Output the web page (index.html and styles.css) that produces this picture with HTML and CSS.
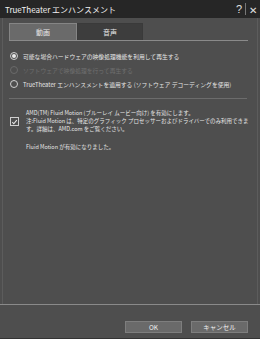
FILE: index.html
```html
<!DOCTYPE html>
<html>
<head>
    <title>TrueTheater エンハンスメント</title>
    <link rel="stylesheet" href="styles.css">
</head>
<body>
    <div class="window">
        <div class="titlebar">
            <span class="title">TrueTheater エンハンスメント</span>
            <span class="controls">
                <span class="help">?</span>
                <span class="divider"></span>
                <span class="close">✕</span>
            </span>
        </div>
        <div class="panel">
            <div class="tabs">
                <div class="tab active">動画</div>
                <div class="tab">音声</div>
            </div>
            <div class="options">
                <div class="option">
                    <span class="radio checked"></span>
                    <span>可能な場合ハードウェアの映像処理機能を利用して再生する</span>
                </div>
                <div class="option disabled">
                    <span class="radio"></span>
                    <span>ソフトウェアで映像処理を行って再生する</span>
                </div>
                <div class="option">
                    <span class="radio"></span>
                    <span>TrueTheater エンハンスメントを適用する (ソフトウェア デコーディングを使用)</span>
                </div>
            </div>
            <div class="fluid">
                <span class="checkbox">
                    <svg width="8" height="8" viewBox="0 0 8 8"><path d="M1.5 4.2 L3.2 6 L6.6 1.8" fill="none" stroke="#e8e8e8" stroke-width="1.2"/></svg>
                </span>
                <div class="fluid-text">
                    <p>AMD(TM) Fluid Motion (ブルーレイ ムービー向け) を有効にします。<br>注:Fluid Motion は、特定のグラフィック プロセッサーおよびドライバーでのみ利用できま<br>す。詳細は、AMD.com をご覧ください。</p>
                    <p class="status">Fluid Motion が有効になりました。</p>
                </div>
            </div>
        </div>
        <div class="footer">
            <button class="button">OK</button>
            <button class="button">キャンセル</button>
        </div>
    </div>
</body>
</html>
```

FILE: styles.css
```css
body {
    margin: 0;
    background: #1e1e1e;
    font-family: "Noto Sans CJK JP", "Liberation Sans", sans-serif;
    color: #e6e6e6;
}
.window {
    width: 260px;
    height: 339px;
    background: #4e4e4e;
    display: flex;
    flex-direction: column;
    box-sizing: border-box;
    border-bottom: 1px solid #333;
}
.titlebar {
    height: 18px;
    background: #262626;
    display: flex;
    align-items: center;
    justify-content: space-between;
    padding: 0 3px 0 5px;
    flex-shrink: 0;
}
.title {
    font-size: 8px;
    color: #f2f2f2;
}
.controls {
    display: flex;
    align-items: center;
    gap: 3px;
    color: #e0e0e0;
}
.help {
    font-family: "Liberation Sans", sans-serif;
    font-size: 11px;
}
.divider {
    width: 1px;
    height: 12px;
    background: #777;
}
.close {
    font-size: 10px;
}
.panel {
    flex: 1;
    margin: 0 2px;
    border-left: 1px solid #5c5c5c;
    border-right: 1px solid #5c5c5c;
    padding: 5px 10px 0 6px;
}
.tabs {
    display: flex;
    border-bottom: 1px solid #8a8a8a;
    margin-right: -1px;
}
.tab {
    width: 66px;
    height: 17px;
    display: flex;
    align-items: center;
    justify-content: center;
    font-size: 7px;
    background: #3d3d3d;
    border: 1px solid #3a3a3a;
    border-bottom: none;
    box-sizing: border-box;
}
.tab.active {
    width: 68px;
    background: #6a6a6a;
    border-color: #858585;
}
.options {
    padding: 10px 0 9px 0;
    border-bottom: 1px solid #6c6c6c;
    display: flex;
    flex-direction: column;
    gap: 4px;
}
.option {
    display: flex;
    align-items: center;
    gap: 5px;
    font-size: 5.8px;
    height: 10px;
    padding-left: 1px;
    white-space: nowrap;
}
.option.disabled {
    color: #6e6e6e;
}
.radio {
    width: 8px;
    height: 8px;
    border-radius: 50%;
    border: 1px solid #cfcfcf;
    box-sizing: border-box;
    display: flex;
    align-items: center;
    justify-content: center;
    flex-shrink: 0;
}
.option.disabled .radio {
    border-color: #6a6a6a;
}
.radio.checked::after {
    content: "";
    width: 4px;
    height: 4px;
    border-radius: 50%;
    background: #e8e8e8;
}
.fluid {
    display: flex;
    align-items: flex-start;
    padding-top: 10px;
    padding-left: 1px;
}
.checkbox {
    width: 9px;
    height: 9px;
    border: 1px solid #cfcfcf;
    box-sizing: border-box;
    margin-top: 8px;
    margin-right: 7px;
    display: flex;
    align-items: center;
    justify-content: center;
    flex-shrink: 0;
}
.fluid-text {
    font-size: 5.5px;
    line-height: 8px;
    white-space: nowrap;
}
.fluid-text p {
    margin: 0;
}
.fluid-text .status {
    margin-top: 10px;
}
.footer {
    height: 28px;
    flex-shrink: 0;
    border-top: 1px solid #8a8a8a;
    display: flex;
    justify-content: flex-end;
    align-items: flex-end;
    gap: 9px;
    padding: 0 12px 5px 0;
}
.button {
    width: 57px;
    height: 12px;
    background: #6a6a6a;
    border: 1px solid #7e7e7e;
    color: #f0f0f0;
    font-family: "Noto Sans CJK JP", "Liberation Sans", sans-serif;
    font-size: 6.5px;
    padding: 0;
    line-height: 10px;
}
```
